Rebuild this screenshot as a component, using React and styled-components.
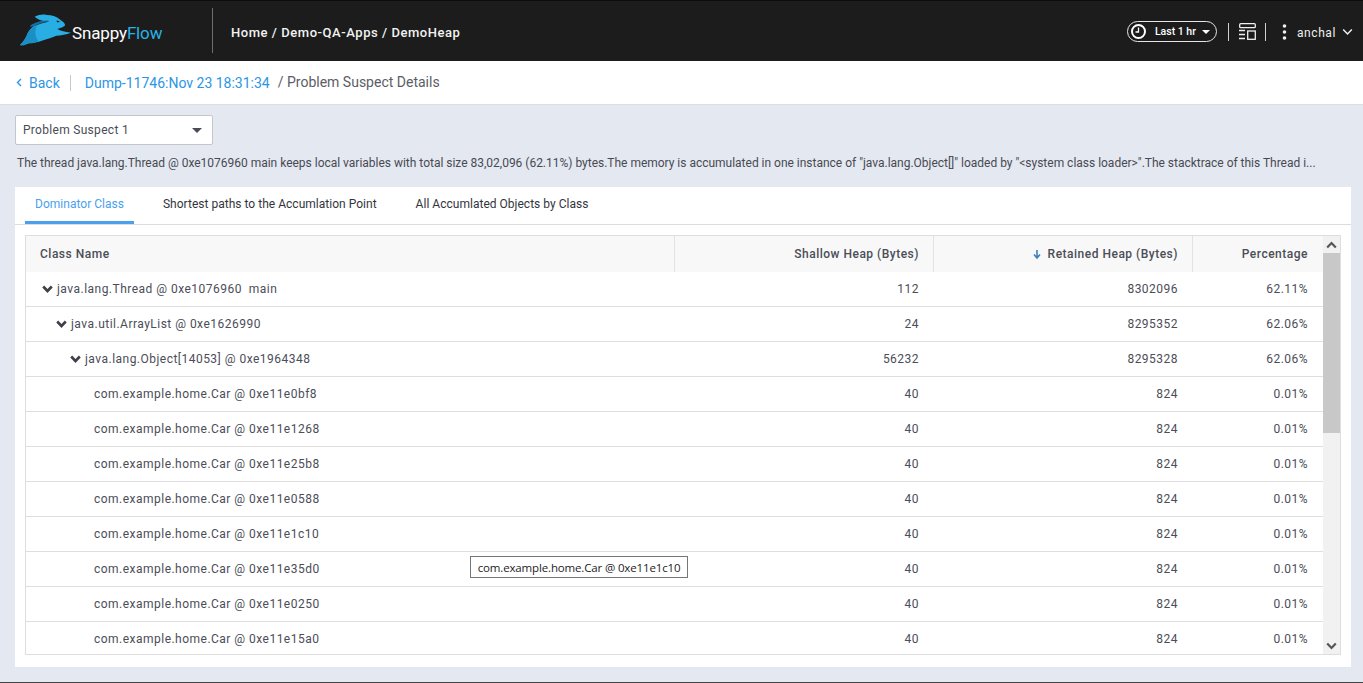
import React from 'react';
import styled, { createGlobalStyle } from 'styled-components';

const GlobalStyle = createGlobalStyle`
    html, body {
        margin: 0;
        padding: 0;
        height: 100%;
        overflow: hidden;
        font-family: Roboto, "Liberation Sans", sans-serif;
        background: #e4e8f1;
    }
    #root { height: 100%; }
    * { box-sizing: border-box; }
`;

const Page = styled.div`
    height: 683px;
    display: flex;
    flex-direction: column;
    border-bottom: 1px solid #444;
`;

const TopBar = styled.div`
    height: 61px;
    flex: none;
    background: #1c1c1c;
    border-top: 1px solid #0c0c0c;
    padding-top: 1px;
    display: flex;
    align-items: center;
    color: #fff;
`;

const LogoWrap = styled.div`
    width: 213px;
    height: 45px;
    margin-top: -2px;
    padding-left: 19px;
    display: flex;
    align-items: center;
    border-right: 1px solid #6e6e6e;
`;

const LogoText = styled.span`
    font-size: 17px;
    letter-spacing: -0.15px;
    margin-top: 5px;
    color: #fff;
`;

const LogoAccent = styled.span`
    color: #29b3e6;
`;

const Crumbs = styled.div`
    margin: 2px 0 0 18px;
    font-size: 13px;
    font-weight: 500;
    letter-spacing: 0.55px;
    color: #f2f2f2;
`;

const TopRight = styled.div`
    margin-left: auto;
    padding-right: 6px;
    display: flex;
    align-items: center;
    height: 100%;
`;

const TimePill = styled.div`
    width: 90px;
    height: 21px;
    border: 1px solid #e6e6e6;
    border-radius: 11px;
    display: flex;
    align-items: center;
    padding-left: 2px;
    font-size: 10.5px;
    font-weight: 500;
`;

const PillLabel = styled.span`
    margin-left: 8px;
    margin-right: 6px;
`;

const VLine = styled.div`
    width: 1px;
    height: 18px;
    background: #cfcfcf;
    margin: ${(p) => p.$margin};
`;

const UserName = styled.span`
    font-size: 12px;
    letter-spacing: 0.6px;
    margin: 2px 6px 0 10px;
    color: #f0f0f0;
`;

const SubBar = styled.div`
    height: 44px;
    flex: none;
    background: #fff;
    border-bottom: 1px solid #dcdfe6;
    display: flex;
    align-items: center;
    padding-left: 16px;
    font-size: 14px;
`;

const BackLink = styled.a`
    color: #2b96e6;
    display: flex;
    align-items: center;
    gap: 7px;
    padding-right: 10px;
    border-right: 1px solid #c9c9c9;
    height: 16px;
`;

const DumpLink = styled.a`
    color: #2b96e6;
    margin-left: 14px;
`;

const CrumbTail = styled.span`
    color: #5b5d66;
    margin-left: 8px;
    margin-top: -2px;
`;

const Body = styled.div`
    flex: 1;
    min-height: 0;
    padding: 10px 12px 15px 15px;
    display: flex;
    flex-direction: column;
`;

const SelectBox = styled.div`
    width: 198px;
    height: 30px;
    flex: none;
    background: #fff;
    border: 1px solid #c4c6cc;
    border-radius: 2px;
    display: flex;
    align-items: center;
    justify-content: space-between;
    padding: 0 10px 0 7px;
    font-size: 12px;
    letter-spacing: 0.3px;
    color: #4a4c55;
`;

const Caret = styled.span`
    width: 0;
    height: 0;
    border-left: ${(p) => p.$size}px solid transparent;
    border-right: ${(p) => p.$size}px solid transparent;
    border-top: ${(p) => p.$size}px solid ${(p) => p.$color};
`;

const Description = styled.div`
    margin: 11px 0 0 2px;
    height: 31px;
    font-size: 12px;
    line-height: 15px;
    letter-spacing: -0.012px;
    color: #484a52;
    white-space: nowrap;
`;

const Card = styled.div`
    flex: 1;
    min-height: 0;
    background: #fff;
    padding: 0 10px 12px 10px;
    display: flex;
    flex-direction: column;
`;

const Tabs = styled.div`
    height: 38px;
    flex: none;
    margin: 0 -10px;
    padding-left: 10px;
    display: flex;
    border-bottom: 1px solid #dcdcdc;
`;

const Tab = styled.div`
    height: 37px;
    padding: 0 10px;
    margin-right: 19px;
    display: flex;
    align-items: center;
    font-size: 12px;
    letter-spacing: 0.02px;
    color: ${(p) => (p.$active ? '#4a9fee' : '#33353c')};
    border-bottom: 3px solid ${(p) => (p.$active ? '#4a9fee' : 'transparent')};
`;

const TableFrame = styled.div`
    position: relative;
    margin-top: 10px;
    flex: 1;
    min-height: 0;
    border: 1px solid #dedede;
    display: flex;
    overflow: hidden;
`;

const TableArea = styled.div`
    flex: 1;
    min-width: 0;
    overflow: hidden;
`;

const columns = '649px 259px 259px 130px';

const HeadRow = styled.div`
    display: grid;
    grid-template-columns: ${columns};
    height: 36px;
    background: #f8f8f8;
`;

const HeadCell = styled.div`
    display: flex;
    align-items: center;
    justify-content: ${(p) => (p.$left ? 'flex-start' : 'flex-end')};
    padding: 0 14px;
    font-size: 12px;
    font-weight: 500;
    letter-spacing: 0.5px;
    color: #4b4d57;
    border-right: 1px solid ${(p) => (p.$last ? 'transparent' : '#e2e2e2')};
`;

const Row = styled.div`
    display: grid;
    grid-template-columns: ${columns};
    height: 35px;
    border-bottom: 1px solid #dedede;
`;

const Cell = styled.div`
    display: flex;
    align-items: center;
    justify-content: flex-end;
    padding: 0 15px 0 0;
    font-size: 12px;
    letter-spacing: 0.48px;
    color: #4b4d57;
`;

const NameCell = styled(Cell)`
    justify-content: flex-start;
    padding-left: ${(p) => p.$indent}px;
`;

const RowLabel = styled.span`
    white-space: pre;
`;

const Chevron = styled.svg`
    width: 11px;
    height: 8px;
    margin-right: 4px;
    flex: none;
`;

const Scrollbar = styled.div`
    width: 17px;
    flex: none;
    background: #f1f1f1;
    display: flex;
    flex-direction: column;
`;

const ScrollButton = styled.div`
    height: 17px;
    flex: none;
    display: flex;
    align-items: center;
    justify-content: center;
    padding-left: 4px;
`;

const ScrollThumb = styled.div`
    height: 180px;
    flex: none;
    background: #c8c8c8;
`;

const ScrollRest = styled.div`
    flex: 1;
`;

const Tooltip = styled.div`
    position: absolute;
    left: 444px;
    top: 320px;
    width: 218px;
    height: 22px;
    background: #fff;
    border: 1px solid #767676;
    display: flex;
    align-items: center;
    justify-content: center;
    font-family: "Open Sans", "Noto Sans", sans-serif;
    font-size: 11.5px;
    letter-spacing: -0.15px;
    color: #1c1c1c;
    white-space: nowrap;
`;

const rows = [
    { name: 'java.lang.Thread @ 0xe1076960  main', shallow: '112', retained: '8302096', pct: '62.11%', indent: 16, open: true },
    { name: 'java.util.ArrayList @ 0xe1626990', shallow: '24', retained: '8295352', pct: '62.06%', indent: 30, open: true },
    { name: 'java.lang.Object[14053] @ 0xe1964348', shallow: '56232', retained: '8295328', pct: '62.06%', indent: 44, open: true },
    { name: 'com.example.home.Car @ 0xe11e0bf8', shallow: '40', retained: '824', pct: '0.01%', indent: 68 },
    { name: 'com.example.home.Car @ 0xe11e1268', shallow: '40', retained: '824', pct: '0.01%', indent: 68 },
    { name: 'com.example.home.Car @ 0xe11e25b8', shallow: '40', retained: '824', pct: '0.01%', indent: 68 },
    { name: 'com.example.home.Car @ 0xe11e0588', shallow: '40', retained: '824', pct: '0.01%', indent: 68 },
    { name: 'com.example.home.Car @ 0xe11e1c10', shallow: '40', retained: '824', pct: '0.01%', indent: 68 },
    { name: 'com.example.home.Car @ 0xe11e35d0', shallow: '40', retained: '824', pct: '0.01%', indent: 68 },
    { name: 'com.example.home.Car @ 0xe11e0250', shallow: '40', retained: '824', pct: '0.01%', indent: 68 },
    { name: 'com.example.home.Car @ 0xe11e15a0', shallow: '40', retained: '824', pct: '0.01%', indent: 68 },
];

function Rabbit() {
    return (
        <svg width="53" height="33" viewBox="0 0 54 35" preserveAspectRatio="none" style={{ flex: 'none' }}>
            <path fill="#29aee4" d="M1 33 C4 30 7 26 9 20 C11 16 14 13 18 12 C22 10 27 9 31 8 C26 8 20 7 16 3 C20 1 24 0 28 1 C34 1 39 3 42 6 C45 8 47 10 47 12 C44 15 41 15 39 16 C42 18 47 19 53 20 C48 22 43 23 38 23 C33 25 28 27 24 28 C19 30 14 31 10 31 C7 32 4 34 1 33 Z" />
            <path fill="#1a8fc6" d="M9 20 C11 17 14 14 18 13 C16 18 16 24 20 29 C16 31 13 31 10 31 C7 32 4 34 1 33 C4 30 7 26 9 20 Z" />
            <path fill="#14709f" d="M11 13 C15 9 22 7 31 7 C25 9 20 10 16 13 C14 13 12 14 11 13 Z" />
            <path fill="#1c1c1c" d="M38 7 L42 8 L39 9 Z" />
        </svg>
    );
}

function ClockIcon() {
    return (
        <svg width="17" height="17" viewBox="0 0 17 17" style={{ flex: 'none' }}>
            <circle cx="8.5" cy="8.5" r="6.5" fill="none" stroke="#fff" strokeWidth="2" />
            <path d="M8.5 4.5 V9 H5.5" fill="none" stroke="#fff" strokeWidth="1.3" />
        </svg>
    );
}

function LayoutIcon() {
    return (
        <svg width="17" height="17" viewBox="0 0 17 17" style={{ flex: 'none' }}>
            <rect x="0.7" y="0.7" width="15.6" height="4" rx="1" fill="none" stroke="#f0f0f0" strokeWidth="1.3" />
            <path d="M0 7.5 H6 M0 11.5 H6 M0 15.5 H6" stroke="#f0f0f0" strokeWidth="1.6" />
            <rect x="8.7" y="8" width="7.6" height="8.3" fill="none" stroke="#f0f0f0" strokeWidth="1.3" />
        </svg>
    );
}

function DotsIcon() {
    return (
        <svg width="5" height="16" viewBox="0 0 5 16" style={{ flex: 'none' }}>
            <circle cx="2.5" cy="2" r="1.8" fill="#f0f0f0" />
            <circle cx="2.5" cy="8" r="1.8" fill="#f0f0f0" />
            <circle cx="2.5" cy="14" r="1.8" fill="#f0f0f0" />
        </svg>
    );
}

function ChevronIcon({ color = '#3f4148', up, width = 2.6 }) {
    return (
        <Chevron viewBox="0 0 11 8">
            <path d={up ? 'M1.2 6.5 L5.5 2 L9.8 6.5' : 'M1.2 1.5 L5.5 6 L9.8 1.5'} fill="none" stroke={color} strokeWidth={width} />
        </Chevron>
    );
}

export default function App() {
    return (
        <Page>
            <GlobalStyle />
            <TopBar>
                <LogoWrap>
                    <Rabbit />
                    <LogoText>Snappy<LogoAccent>Flow</LogoAccent></LogoText>
                </LogoWrap>
                <Crumbs>Home / Demo-QA-Apps / DemoHeap</Crumbs>
                <TopRight>
                    <TimePill>
                        <ClockIcon />
                        <PillLabel>Last 1 hr</PillLabel>
                        <Caret $size={4} $color="#fff" />
                    </TimePill>
                    <VLine $margin="0 10px 0 11px" />
                    <LayoutIcon />
                    <VLine $margin="0 16px 0 9px" />
                    <DotsIcon />
                    <UserName>anchal</UserName>
                    <ChevronIcon color="#f0f0f0" width={1.5} />
                </TopRight>
            </TopBar>
            <SubBar>
                <BackLink>
                    <svg width="6" height="9" viewBox="0 0 6 9">
                        <path d="M5 1 L1.5 4.5 L5 8" fill="none" stroke="#2b96e6" strokeWidth="1.4" />
                    </svg>
                    Back
                </BackLink>
                <DumpLink>Dump-11746:Nov 23 18:31:34</DumpLink>
                <CrumbTail>/ Problem Suspect Details</CrumbTail>
            </SubBar>
            <Body>
                <SelectBox>
                    Problem Suspect 1
                    <Caret $size={5} $color="#4a4c55" />
                </SelectBox>
                <Description>
                    The thread java.lang.Thread @ 0xe1076960 main keeps local variables with total size 83,02,096 (62.11%) bytes.The memory is accumulated in one instance of "java.lang.Object[]" loaded by "&lt;system class loader&gt;".The stacktrace of this Thread i...
                </Description>
                <Card>
                    <Tabs>
                        <Tab $active>Dominator Class</Tab>
                        <Tab>Shortest paths to the Accumlation Point</Tab>
                        <Tab>All Accumlated Objects by Class</Tab>
                    </Tabs>
                    <TableFrame>
                        <TableArea>
                            <HeadRow>
                                <HeadCell $left>Class Name</HeadCell>
                                <HeadCell>Shallow Heap (Bytes)</HeadCell>
                                <HeadCell>
                                    <svg width="8" height="9" viewBox="0 0 8 9" style={{ marginRight: 7 }}>
                                        <path d="M4 0 V7 M1 4.5 L4 8 L7 4.5" fill="none" stroke="#3f7fc0" strokeWidth="1.6" />
                                    </svg>
                                    Retained Heap (Bytes)
                                </HeadCell>
                                <HeadCell $last>Percentage</HeadCell>
                            </HeadRow>
                            {rows.map((row) => (
                                <Row key={row.name}>
                                    <NameCell $indent={row.indent}>
                                        {row.open && <ChevronIcon />}
                                        <RowLabel>{row.name}</RowLabel>
                                    </NameCell>
                                    <Cell>{row.shallow}</Cell>
                                    <Cell>{row.retained}</Cell>
                                    <Cell>{row.pct}</Cell>
                                </Row>
                            ))}
                        </TableArea>
                        <Scrollbar>
                            <ScrollButton>
                                <ChevronIcon color="#555" up width={2.2} />
                            </ScrollButton>
                            <ScrollThumb />
                            <ScrollRest />
                            <ScrollButton>
                                <ChevronIcon color="#555" width={2.2} />
                            </ScrollButton>
                        </Scrollbar>
                        <Tooltip>com.example.home.Car @ 0xe11e1c10</Tooltip>
                    </TableFrame>
                </Card>
            </Body>
        </Page>
    );
}
